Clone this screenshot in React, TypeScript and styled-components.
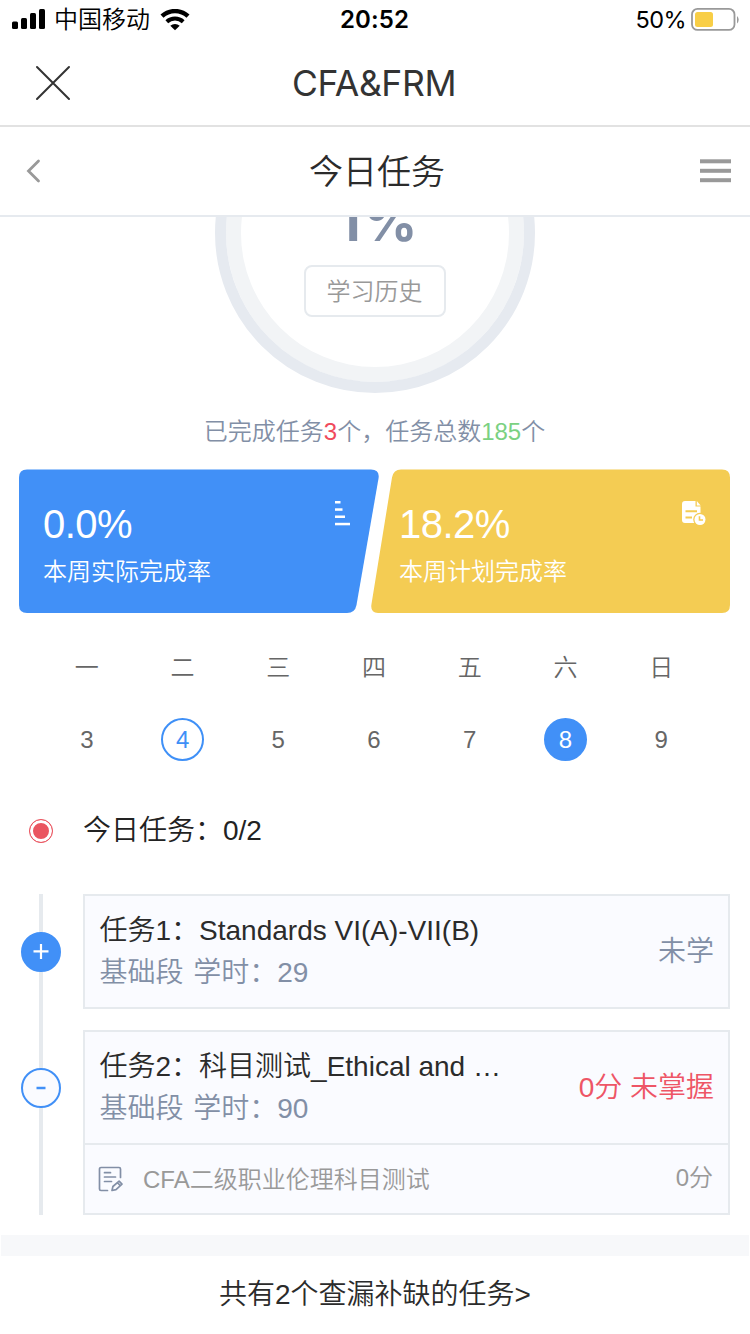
import React from 'react';
import styled, { createGlobalStyle, css } from 'styled-components';

const GlobalStyle = createGlobalStyle`
  *, *::before, *::after { box-sizing: border-box; }
  body {
    margin: 0;
    background: #fff;
    color: #2b2b2b;
    font-family: 'Liberation Sans', 'Noto Sans CJK SC', sans-serif;
    font-weight: 350;
  }
`;

const Screen = styled.div`
  width: 750px;
  height: 1334px;
  display: flex;
  flex-direction: column;
  overflow: hidden;
  background: #fff;
`;

const StatusBar = styled.div`
  height: 40px;
  flex: none;
  display: grid;
  grid-template-columns: 1fr auto 1fr;
  align-items: center;
  padding: 0 11px 2px 12px;
  color: #000;
  font-family: 'Inter', 'Noto Sans CJK SC', sans-serif;
  font-size: 24px;
  font-weight: 400;
  line-height: 38px;
`;

const StatusGroup = styled.div<{ $end?: boolean }>`
  display: flex;
  align-items: center;
  justify-content: ${p => (p.$end ? 'flex-end' : 'flex-start')};
`;

const Carrier = styled.span`
  margin: 1px 10px 0 8px;
  font-weight: 350;
`;

const Clock = styled.span`
  padding-right: 2px;
  font-weight: 600;
  letter-spacing: 0.1px;
`;

const BatteryLevel = styled.span`
  margin-right: 5px;
  letter-spacing: -0.6px;
  font-size: 23.500px;
`;

const NavBar = styled.header`
  height: 87px;
  flex: none;
  display: grid;
  grid-template-columns: 80px 1fr 80px;
  align-items: center;
  border-bottom: 2px solid #e2e2e2;
`;

const NavTitle = styled.h1`
  margin: 0;
  padding: 2px 2px 0 0;
  text-align: center;
  font-family: 'Inter', sans-serif;
  font-size: 35.500px;
  font-weight: 400;
  line-height: 44px;
  letter-spacing: -0.4px;
  color: #333;
`;

const NavIcon = styled.span`
  display: flex;
  padding-left: 35px;
`;

const PageHeader = styled.div`
  height: 90px;
  flex: none;
  display: grid;
  grid-template-columns: 80px 1fr 80px;
  align-items: center;
  border-bottom: 2px solid #e6eaef;
`;

const PageTitle = styled.h2`
  margin: 0;
  padding: 1px 0 0 4px;
  text-align: center;
  font-size: 34px;
  font-weight: inherit;
  line-height: 50px;
`;

const BackIcon = styled.span`
  display: flex;
  padding-left: 26px;
`;

const MenuIcon = styled.span`
  display: flex;
  justify-content: flex-end;
  padding-right: 19px;
`;

const Content = styled.main`
  flex: 1;
  overflow: hidden;
  display: flex;
  flex-direction: column;
`;

const ProgressRing = styled.div`
  width: 320px;
  height: 320px;
  flex: none;
  margin: -144px auto 0 214.500px;
  border-radius: 50%;
  border: 11px solid #e6eaf0;
  box-shadow: inset 0 0 0 15px #f2f4f6;
  display: flex;
  flex-direction: column;
  align-items: center;
  padding-top: 103px;
`;

const Percent = styled.div`
  height: 78px;
  padding-left: 9px;
  font-family: 'Inter', sans-serif;
  font-size: 53px;
  letter-spacing: 3px;
  line-height: 71px;
  font-weight: 700;
  color: #828fa6;
`;

const HistoryButton = styled.button`
  width: 142px;
  height: 52px;
  padding: 0;
  border: 2px solid #e6eaee;
  border-radius: 8px;
  background: #fff;
  color: #999;
  font-family: inherit;
  font-weight: inherit;
  font-size: 24px;
  line-height: 50px;
`;

const Summary = styled.p`
  margin: 21px 1px 0 0;
  text-align: center;
  font-size: 24px;
  line-height: 36px;
  color: #828fa6;
`;

const Count = styled.span<{ $tone: string }>`
  color: ${p => p.$tone};
`;

const Rates = styled.section`
  display: flex;
  justify-content: space-between;
  height: 144px;
  margin: 19px 20px 0 19px;
`;

const RateCard = styled.div<{ $side: 'left' | 'right' }>`
  width: 360px;
  height: 144px;
  display: flex;
  justify-content: space-between;
  color: #fff;
  ${p =>
    p.$side === 'left'
      ? css`
          padding: 30px 29px 0 24px;
          background: #4190f7;
          clip-path: path('M8 0.5H352Q361 0.5 359.5 9.5L337.500 136Q336 144 328 144H8Q0 144 0 136V8.500Q0 0.500 8 0.500Z');
        `
      : css`
          padding: 30px 24px 0 29px;
          margin-left: -9px;
          background: #f4cc53;
          clip-path: path('M31 0.500H352Q360 0.500 360 8.500V136Q360 144 352 144H8Q0 144 1.500 135L22 8.500Q23.500 0.500 31 0.500Z');
        `}
`;

const RateText = styled.div`
  display: flex;
  flex-direction: column;
`;

const RateValue = styled.span`
  font-size: 40px;
  line-height: 50px;
  letter-spacing: -0.5px;
`;

const RateLabel = styled.span`
  margin-top: 5px;
  font-size: 24px;
  line-height: 36px;
`;

const Calendar = styled.section`
  display: grid;
  grid-template-columns: repeat(7, 1fr);
  justify-items: center;
  align-items: center;
  grid-template-rows: 36px 44px;
  row-gap: 31px;
  margin: 37px 41px 0 39px;
  font-size: 24px;
  color: #666;
`;

const Weekday = styled.span`
  line-height: 36px;
`;

const Day = styled.span<{ $state?: 'today' | 'selected' }>`
  width: 43px;
  height: 43px;
  border-radius: 50%;
  border: 2px solid transparent;
  text-align: center;
  line-height: 39px;
  ${p => p.$state === 'today' && css`border-color: #3f90f7; color: #3f90f7;`}
  ${p => p.$state === 'selected' && css`border-color: #4190f7; background: #4190f7; color: #fff;`}
`;

const TodayRow = styled.div`
  display: flex;
  align-items: center;
  height: 42px;
  margin: 49px 0 0 29px;
  font-size: 28px;
  line-height: 42px;
  color: #222;
`;

const RecordDot = styled.span`
  width: 24px;
  height: 24px;
  margin-right: 30px;
  border: 1px solid #ea5560;
  border-radius: 50%;
  background: #ea5560;
  box-shadow: inset 0 0 0 3px #fff;
`;

const Timeline = styled.section`
  display: flex;
  flex-direction: column;
  gap: 21px;
  margin: 42px 20px 0 21px;
  background: linear-gradient(#e6eaee, #e6eaee) 18px 0 / 4px 100% no-repeat;
`;

const TimelineItem = styled.div`
  display: flex;
  align-items: flex-start;
  gap: 22px;
`;

const Toggle = styled.button<{ $filled?: boolean }>`
  width: 40px;
  height: 40px;
  flex: none;
  margin: 37.500px 0 0;
  padding: 0;
  border: 2px solid #4190f7;
  border-radius: 50%;
  background: ${p => (p.$filled ? '#4190f7' : '#fafbff')};
  color: ${p => (p.$filled ? '#fff' : '#4190f7')};
  display: flex;
  align-items: center;
  justify-content: center;
`;

const TaskCard = styled.article`
  flex: 1;
  border: 2px solid #e6eaee;
  background: #fafbff;
`;

const TaskMain = styled.div`
  height: 111px;
  display: flex;
  align-items: center;
  justify-content: space-between;
  padding: 0 14px 0 14.500px;
  font-size: 28px;
  line-height: 42px;
`;

const TaskTitle = styled.div`
  color: #2b2b2b;
`;

const TaskMeta = styled.div`
  color: #828fa6;
  word-spacing: 2px;
`;

const TaskStatus = styled.span<{ $alert?: boolean }>`
  color: ${p => (p.$alert ? '#ee5566' : '#828fa6')};
`;

const SubTask = styled.div`
  height: 70px;
  display: flex;
  align-items: center;
  padding: 0 15px 0 13px;
  border-top: 2px solid #e6eaee;
  font-size: 24px;
  line-height: 36px;
  color: #999;
`;

const SubTaskName = styled.span`
  flex: 1;
  margin: 1px 0 0 19px;
`;

const SubTaskScore = styled.span`
  margin-top: -3px;
`;

const Divider = styled.div`
  height: 21px;
  flex: none;
  margin: 20px 1px 0;
  background: #f7f8fa;
`;

const FooterLink = styled.div`
  padding-top: 18px;
  text-align: center;
  font-size: 28px;
  line-height: 42px;
  color: #2b2b2b;
`;

const SignalIcon = () => (
  <svg width="34" height="22" viewBox="0 0 34 22">
    <rect x="0" y="12.500" width="6" height="7.500" rx="1.500" />
    <rect x="9" y="9" width="6" height="11" rx="1.500" />
    <rect x="18" y="4" width="6" height="16" rx="1.500" />
    <rect x="27" y="0" width="6" height="20" rx="1.500" />
  </svg>
);

const WifiIcon = () => (
  <svg width="30" height="22" viewBox="0 0 30 22">
    <path d="M2 7.200a19 19 0 0 1 26 0" fill="none" stroke="#000" strokeWidth="4.400" />
    <path d="M6.800 12.700a12 12 0 0 1 16.400 0" fill="none" stroke="#000" strokeWidth="4" />
    <path d="M10.300 16.800a7 7 0 0 1 9.400 0L15 21.300z" />
  </svg>
);

const BatteryIcon = () => (
  <svg width="48" height="24" viewBox="0 0 48 24">
    <rect x="1" y="0.900" width="42.500" height="21" rx="5.500" fill="none" stroke="#999" strokeWidth="1.800" />
    <rect x="4" y="4" width="18" height="15" rx="2.500" fill="#f8ce46" />
    <path d="M46 8a5 5 0 0 1 0 7.500z" fill="#999" />
  </svg>
);

const BarsIcon = () => (
  <svg width="15" height="28" viewBox="0 0 15 28" fill="#fff">
    <rect y="2" width="5.500" height="2.500" />
    <rect y="9.300" width="7.500" height="2.500" />
    <rect y="16.500" width="10" height="2.500" />
    <rect y="23.800" width="15" height="2.500" />
  </svg>
);

const PlanIcon = () => (
  <svg width="24" height="28" viewBox="0 -1 24 28">
    <path d="M3 1h10.500v5.500h5V20a3 3 0 0 1-3 3H3a3 3 0 0 1-3-3V4a3 3 0 0 1 3-3z" fill="#fff" />
    <path d="M14.800 1l3.900 4.500h-3.900z" fill="#fff" />
    <path d="M3.500 11.300h11.500M3.500 17.500h6.500" stroke="#f4cc53" strokeWidth="2" />
    <circle cx="18" cy="19.500" r="6.800" fill="#f4cc53" />
    <circle cx="18" cy="19.500" r="5.500" fill="#fff" />
    <path d="M17.500 16.300v3.700h3.500" fill="none" stroke="#f4cc53" strokeWidth="1.600" />
  </svg>
);

const ExamIcon = () => (
  <svg width="26" height="26" viewBox="0 0 26 26" fill="none" stroke="#828fa6" strokeWidth="1.700" strokeLinecap="round" strokeLinejoin="round">
    <path d="M9.500 24.500H3A1.500 1.500 0 0 1 1.500 23V3A1.500 1.500 0 0 1 3 1.500h18A1.500 1.500 0 0 1 22.500 3v8.500" />
    <path d="M6.500 6.700h6M6.500 11h11M6.500 15.500h7" />
    <path d="M14 24.500l.9-4 6.200-5.300 2.900 3-6 5.400zM19.500 16.700l2.600 2.800" />
  </svg>
);

const weekdays = ['一', '二', '三', '四', '五', '六', '日'];
const days: { date: number; state?: 'today' | 'selected' }[] = [
  { date: 3 },
  { date: 4, state: 'today' },
  { date: 5 },
  { date: 6 },
  { date: 7 },
  { date: 8, state: 'selected' },
  { date: 9 },
];

export default function App() {
  return (
    <Screen>
      <GlobalStyle />
      <StatusBar>
        <StatusGroup>
          <SignalIcon />
          <Carrier>中国移动</Carrier>
          <WifiIcon />
        </StatusGroup>
        <Clock>20:52</Clock>
        <StatusGroup $end>
          <BatteryLevel>50%</BatteryLevel>
          <BatteryIcon />
        </StatusGroup>
      </StatusBar>

      <NavBar>
        <NavIcon>
          <svg width="36" height="36" viewBox="0 0 36 36" stroke="#333" strokeWidth="2" strokeLinecap="round">
            <path d="M2 2l32 32M34 2L2 34" />
          </svg>
        </NavIcon>
        <NavTitle>CFA&amp;FRM</NavTitle>
      </NavBar>

      <PageHeader>
        <BackIcon>
          <svg width="16" height="24" viewBox="0 0 16 24" fill="none" stroke="#999" strokeWidth="2.800" strokeLinecap="round">
            <path d="M12.500 2L2.500 12l10 10" />
          </svg>
        </BackIcon>
        <PageTitle>今日任务</PageTitle>
        <MenuIcon>
          <svg width="31" height="24" viewBox="0 0 31 24" fill="#999">
            <rect y="0.300" width="31" height="4" />
            <rect y="9.800" width="31" height="4" />
            <rect y="19.200" width="31" height="4" />
          </svg>
        </MenuIcon>
      </PageHeader>

      <Content>
        <ProgressRing>
          <Percent>1%</Percent>
          <HistoryButton>学习历史</HistoryButton>
        </ProgressRing>
        <Summary>
          已完成任务<Count $tone="#f04a5c">3</Count>个，任务总数<Count $tone="#7bd182">185</Count>个
        </Summary>

        <Rates>
          <RateCard $side="left">
            <RateText>
              <RateValue>0.0%</RateValue>
              <RateLabel>本周实际完成率</RateLabel>
            </RateText>
            <BarsIcon />
          </RateCard>
          <RateCard $side="right">
            <RateText>
              <RateValue>18.2%</RateValue>
              <RateLabel>本周计划完成率</RateLabel>
            </RateText>
            <PlanIcon />
          </RateCard>
        </Rates>

        <Calendar>
          {weekdays.map(name => (
            <Weekday key={name}>{name}</Weekday>
          ))}
          {days.map(day => (
            <Day key={day.date} $state={day.state}>{day.date}</Day>
          ))}
        </Calendar>

        <TodayRow>
          <RecordDot />
          今日任务：0/2
        </TodayRow>

        <Timeline>
          <TimelineItem>
            <Toggle $filled aria-label="展开">
              <svg width="16" height="16" viewBox="0 0 16 16" stroke="currentColor" strokeWidth="2.200">
                <path d="M0.500 7.300h15M8 0v15" />
              </svg>
            </Toggle>
            <TaskCard>
              <TaskMain>
                <div>
                  <TaskTitle>任务1：Standards VI(A)-VII(B)</TaskTitle>
                  <TaskMeta>基础段 学时：29</TaskMeta>
                </div>
                <TaskStatus>未学</TaskStatus>
              </TaskMain>
            </TaskCard>
          </TimelineItem>
          <TimelineItem>
            <Toggle aria-label="收起">
              <svg width="10" height="4" viewBox="0 0 10 4" stroke="currentColor" strokeWidth="2.500">
                <path d="M0.500 2h9" />
              </svg>
            </Toggle>
            <TaskCard>
              <TaskMain>
                <div>
                  <TaskTitle>任务2：科目测试_Ethical and …</TaskTitle>
                  <TaskMeta>基础段 学时：90</TaskMeta>
                </div>
                <TaskStatus $alert>0分 未掌握</TaskStatus>
              </TaskMain>
              <SubTask>
                <ExamIcon />
                <SubTaskName>CFA二级职业伦理科目测试</SubTaskName>
                <SubTaskScore>0分</SubTaskScore>
              </SubTask>
            </TaskCard>
          </TimelineItem>
        </Timeline>

        <Divider />
        <FooterLink>共有2个查漏补缺的任务&gt;</FooterLink>
      </Content>
    </Screen>
  );
}
